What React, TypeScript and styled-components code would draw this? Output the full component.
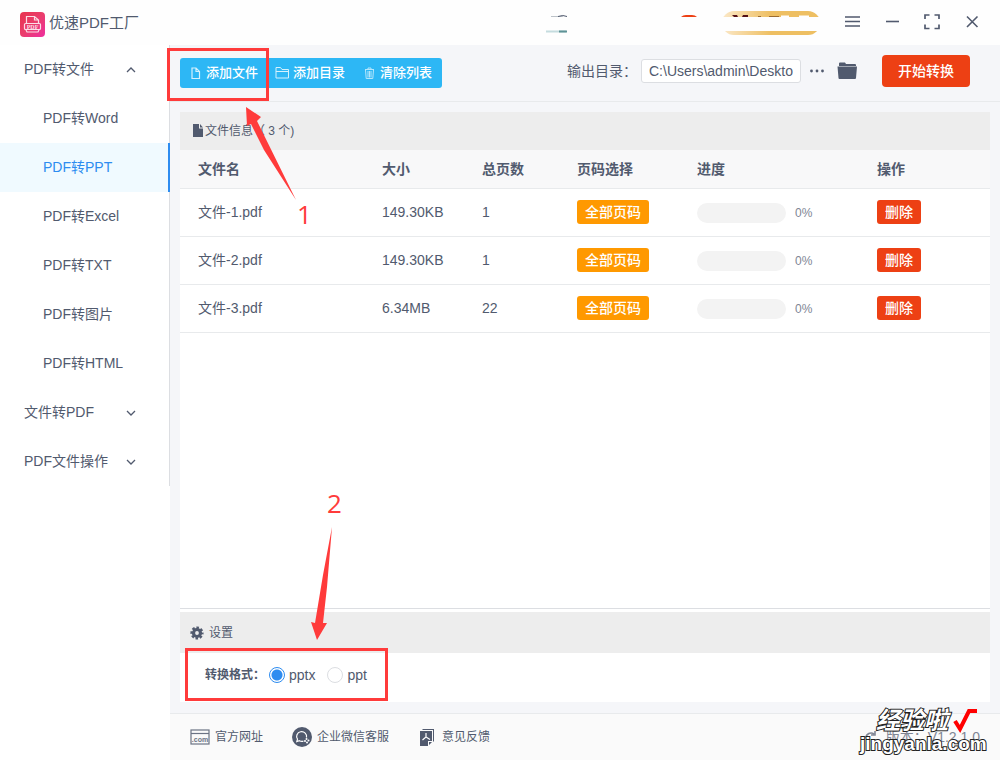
import React, { useState } from "react";
import styled, { createGlobalStyle } from "styled-components";

const Global = createGlobalStyle`
  *, *::before, *::after { box-sizing: border-box; }
  body {
    margin: 0;
    background: #f5f6f9;
    color: #515a6e;
    font: 14px/20px "Liberation Sans", "Noto Sans CJK SC", sans-serif;
  }
  button, input { font: inherit; color: inherit; }
  button { border: 0; padding: 0; background: none; cursor: pointer; }
  a { color: inherit; text-decoration: none; }
  svg { display: block; flex: none; }
`;

const Page = styled.div`
  position: relative;
  min-height: 100vh;
  display: flex;
  flex-direction: column;
`;

const Header = styled.header`
  height: 45px;
  flex: none;
  display: flex;
  align-items: center;
  justify-content: space-between;
  padding: 0 20px;
  background: #fefefe;
`;

const Brand = styled.h1`
  margin: 0;
  display: flex;
  align-items: flex-start;
  gap: 4px;
  padding-top: 4px;
  font-size: 15px;
  font-weight: 400;
  line-height: 22px;
`;

const HeaderRight = styled.div`
  display: flex;
  align-items: center;
`;

const Vip = styled.span`
  width: 98px;
  height: 24px;
  margin: 0 22px;
  border-radius: 12px;
  background: linear-gradient(#fefefe, #fefefe) 0 6px / 100% 14px no-repeat,
    linear-gradient(90deg, #fbe8c8, #eebf62 50%, #eebf62);
`;

const WindowButtons = styled.div`
  display: flex;
  gap: 20px;
  margin-right: -2px;
  padding-bottom: 2px;
`;

const WindowButton = styled.button`
  width: 20px;
  height: 20px;
`;

const Body = styled.div`
  flex: 1;
  display: flex;
`;

const Sidebar = styled.nav`
  width: 170px;
  flex: none;
  background: #fff;
`;

const Menu = styled.div`
  border-right: 1px solid #dcdee2;
`;

const Group = styled.button`
  width: 100%;
  height: 49px;
  display: flex;
  align-items: center;
  justify-content: space-between;
  padding: 0 31px 2px 24px;
`;

const MenuItem = styled.a<{ $active?: boolean }>`
  height: 49px;
  display: flex;
  align-items: center;
  padding: 0 0 2px 43px;
  margin-right: -1px;
  color: ${(p) => (p.$active ? "#2d8cf0" : "inherit")};
  background: ${(p) => (p.$active ? "#f0faff" : "transparent")};
  border-right: ${(p) => (p.$active ? "2px solid #2d8cf0" : "0")};
`;

const Main = styled.main`
  flex: 1;
  min-width: 0;
  display: flex;
  flex-direction: column;
`;

const Toolbar = styled.div`
  height: 57px;
  display: flex;
  align-items: flex-start;
  justify-content: space-between;
  padding: 10px 30px 0 10px;
  border-bottom: 1px solid #e8eaec;
`;

const ActionGroup = styled.div`
  position: relative;
  display: flex;
  height: 30px;
  margin-top: 3px;
  padding-right: 1px;
  border-radius: 3px;
  background: #2db7f5;
`;

const Action = styled.button`
  display: flex;
  align-items: center;
  gap: 4px;
  padding: 0 9px 0 8px;
  color: #fff;
  font-size: 13px;
  font-weight: 500;
`;

const Output = styled.div`
  display: flex;
  align-items: center;
`;

const PathInput = styled.input`
  width: 160px;
  height: 24px;
  margin: 0 8px 0 4px;
  padding: 0 7px;
  border: 1px solid #dcdee2;
  border-radius: 3px;
  background: #fff;
`;

const IconButton = styled.button`
  margin-right: 12px;
`;

const StartButton = styled.button`
  height: 32px;
  margin-left: 12px;
  padding: 0 16px;
  border-radius: 4px;
  background: #ed4014;
  color: #fff;
  font-weight: 500;
`;

const Content = styled.div`
  flex: 1;
  display: flex;
  flex-direction: column;
  padding: 10px 10px 11px;
`;

const Panel = styled.section<{ $grow?: boolean }>`
  position: relative;
  background: #fff;
  flex: ${(p) => (p.$grow ? "1" : "none")};
  border-bottom: ${(p) => (p.$grow ? "1px solid #dcdee2" : "0")};
`;

const PanelTitle = styled.h2<{ $gap: number; $height: number }>`
  margin: 0;
  height: ${(p) => p.$height}px;
  display: flex;
  align-items: center;
  gap: ${(p) => p.$gap}px;
  padding: 0 10px;
  background: #ededed;
  font-size: 12px;
  font-weight: 400;
`;

const Divider = styled.div`
  height: 3px;
  background: #fff;
`;

const FileTable = styled.table`
  width: 100%;
  table-layout: fixed;
  border-collapse: separate;
  border-spacing: 0;

  th, td {
    padding: 0 0 2px 18px;
    border-bottom: 1px solid #e8eaec;
    text-align: left;
  }
  th {
    height: 39px;
    padding-bottom: 0;
    background: #f8f8f9;
    font-weight: 700;
  }
  td { height: 48px; }
`;

const Tag = styled.button<{ $tone: string }>`
  display: block;
  height: 24px;
  padding: 0 8px;
  border-radius: 3px;
  background: ${(p) => p.$tone};
  color: #fff;
  font-weight: 500;
`;

const Progress = styled.div`
  display: flex;
  align-items: center;
  gap: 9px;
  padding-top: 2px;
  font-size: 12px;
  color: #808695;
`;

const Track = styled.span`
  width: 89px;
  height: 20px;
  border-radius: 10px;
  background: #f3f3f3;
`;

const Options = styled.div`
  height: 49px;
  display: flex;
  align-items: center;
  padding: 0 25px 6px;
`;

const OptionsLabel = styled.span`
  width: 64px;
  font-size: 12px;
  font-weight: 700;
`;

const RadioLabel = styled.label`
  display: flex;
  align-items: center;
  gap: 4px;
  margin-right: 12px;
`;

const Radio = styled.input`
  appearance: none;
  width: 16px;
  height: 16px;
  margin: 0;
  border: 1px solid #dcdee2;
  border-radius: 50%;
  background: #fff;

  &:checked {
    border-color: #2d8cf0;
    background: radial-gradient(circle, #2d8cf0 5px, #fff 6px);
  }
`;

const Footer = styled.footer`
  height: 47px;
  display: flex;
  align-items: center;
  gap: 29px;
  padding: 0 20px;
  border-top: 1px solid #e8eaec;
  background: #fafafa;
  font-size: 12px;
`;

const FooterLink = styled.a`
  display: flex;
  align-items: center;
  gap: 5px;
`;

const Version = styled.span`
  margin-left: auto;
  display: flex;
  align-items: center;
  gap: 8px;
  font-size: 14px;
  color: #808695;
`;

const RedBox = styled.span<{ $top: number; $left: number; $width: number }>`
  position: absolute;
  top: ${(p) => p.$top}px;
  left: ${(p) => p.$left}px;
  width: ${(p) => p.$width}px;
  height: 53px;
  border: 3px solid #ff3b3b;
  pointer-events: none;
`;

const Arrow = styled.svg<{ $top: number; $left: number }>`
  position: absolute;
  top: ${(p) => p.$top}px;
  left: ${(p) => p.$left}px;
  pointer-events: none;
`;

const StepNumber = styled.span<{ $top: number; $left: number }>`
  position: absolute;
  top: ${(p) => p.$top}px;
  left: ${(p) => p.$left}px;
  color: #ff3b3b;
  font: 500 26px/26px "Open Sans", sans-serif;
`;

const Watermark = styled.div`
  position: absolute;
  right: 15px;
  bottom: 6px;
  width: 125px;
  display: flex;
  flex-direction: column;
  color: #fff;
  font-weight: 700;
  -webkit-text-stroke: 2px #222;
  paint-order: stroke fill;
  pointer-events: none;
`;

const WatermarkTop = styled.span`
  display: flex;
  align-items: center;
  gap: 4px;
  padding-left: 16px;
  font-size: 24px;
  font-style: italic;
  line-height: 22px;
`;

const WatermarkSite = styled.span`
  font-size: 19px;
  line-height: 20px;
`;

const Chevron = ({ up }: { up?: boolean }) => (
  <svg width="14" height="14" viewBox="0 0 14 14" fill="none" stroke="#515a6e" strokeWidth="1.3">
    <path d={up ? "M3 10l4-4 4 4" : "M3 6l4 4 4-4"} />
  </svg>
);

const Logo = () => (
  <svg width="25" height="25" viewBox="0 0 25 25">
    <defs>
      <linearGradient id="logo" x1="0" y1="0" x2="1" y2="1">
        <stop offset="0" stopColor="#e8344e" />
        <stop offset=".5" stopColor="#ea3d6c" />
        <stop offset="1" stopColor="#ee2fa0" />
      </linearGradient>
    </defs>
    <rect width="25" height="25" rx="4" fill="url(#logo)" />
    <g fill="none" stroke="#fbdde6" strokeWidth="1.2">
      <path d="M6.500 11V4.500h8l4 3.500v3M14.500 4.500V8h4" />
      <rect x="4.500" y="11.500" width="16" height="6" rx="1" />
      <path d="M6 18l1 2h11l1-2" />
    </g>
    <text x="12.500" y="17" textAnchor="middle" fontSize="6" fontWeight="700" fontFamily="Liberation Serif, serif" fill="#fbdde6">PDF</text>
  </svg>
);

const files = [
  { name: "文件-1.pdf", size: "149.30KB", pages: 1 },
  { name: "文件-2.pdf", size: "149.30KB", pages: 1 },
  { name: "文件-3.pdf", size: "6.34MB", pages: 22 },
];

const targets = ["Word", "PPT", "Excel", "TXT", "图片", "HTML"];

export default function App() {
  const [format, setFormat] = useState("pptx");
  const [active, setActive] = useState("PPT");

  return (
    <Page>
      <Global />
      <Header>
        <Brand>
          <Logo />
          优速PDF工厂
        </Brand>
        <HeaderRight>
          <svg width="154" height="24" viewBox="0 0 154 24">
            <path d="M5 5.500h12" stroke="#bcc2c8" />
            <path d="M12 5.500q5-2 9 0" stroke="#515a6e" fill="none" />
            <path d="M0 20.500h20" stroke="#c5dcdf" strokeWidth="2" />
            <path d="M13 20.500h8" stroke="#5e9397" strokeWidth="2" />
            <path d="M135 6q2-2 5-2h6q3 0 5 2z" fill="#ed4014" />
          </svg>
          <Vip>
            <svg width="98" height="24" viewBox="0 0 98 24">
              <path d="M10 4h5l1 2h-4zM20 6l1-2h5v2z" fill="#531016" />
              <path d="M36 5.500h3M47 5.500h10" stroke="#9c6c30" />
              <path d="M59 5.500h8M77 5.500h10" stroke="#fefefe" strokeWidth="2" />
            </svg>
          </Vip>
          <WindowButtons>
            <WindowButton aria-label="菜单">
              <svg width="20" height="20" stroke="#515a6e" strokeWidth="1.5"><path d="M3 5h15M3 9.500h15M3 14h15" /></svg>
            </WindowButton>
            <WindowButton aria-label="最小化">
              <svg width="20" height="20" stroke="#515a6e" strokeWidth="1.6"><path d="M4 9.500h13" /></svg>
            </WindowButton>
            <WindowButton aria-label="最大化">
              <svg width="20" height="20" fill="none" stroke="#515a6e" strokeWidth="1.7">
                <path d="M3 7V3h4.500M12.500 3H17v4M17 12.500V16.500h-4.500M7.500 16.500H3v-4" />
              </svg>
            </WindowButton>
            <WindowButton aria-label="关闭">
              <svg width="20" height="20" stroke="#515a6e" strokeWidth="1.6"><path d="M5 4.500l10.500 10.500M15.500 4.500L5 15" /></svg>
            </WindowButton>
          </WindowButtons>
        </HeaderRight>
      </Header>

      <Body>
        <Sidebar>
          <Menu>
            <Group>PDF转文件<Chevron up /></Group>
            {targets.map((t) => (
              <MenuItem key={t} href="#" $active={t === active} onClick={() => setActive(t)}>
                PDF转{t}
              </MenuItem>
            ))}
            <Group>文件转PDF<Chevron /></Group>
            <Group>PDF文件操作<Chevron /></Group>
          </Menu>
        </Sidebar>

        <Main>
          <Toolbar>
            <ActionGroup>
              <Action>
                <svg width="14" height="14" fill="none" stroke="#d5f1fd" strokeWidth="1.2">
                  <path d="M4 2h4l3.500 3.500v7H4zM8 2v3.500h3.500" />
                </svg>
                添加文件
              </Action>
              <Action>
                <svg width="14" height="14" fill="none" stroke="#d5f1fd" strokeWidth="1">
                  <path d="M1 12V1.500h4.500L7 3.500h6.500V12zM1 5.500h12.500" />
                </svg>
                添加目录
              </Action>
              <Action>
                <svg width="14" height="14" fill="none" stroke="#b5e6fc" strokeWidth="1">
                  <path d="M3 3.500h9M6 3V2h3v1M3.500 4l.7 8.500h6.600l.7-8.500M6 5v6.500M7.500 5v6.500M9 5v6.500" />
                </svg>
                清除列表
              </Action>
              <RedBox $top={-10} $left={-13} $width={102} />
            </ActionGroup>
            <Output>
              <label htmlFor="output">输出目录：</label>
              <PathInput id="output" defaultValue="C:\Users\admin\Deskto" />
              <IconButton aria-label="更多">
                <svg width="16" height="16" fill="#515a6e"><circle cx="2.500" cy="8" r="1.400" /><circle cx="8" cy="8" r="1.400" /><circle cx="13.500" cy="8" r="1.400" /></svg>
              </IconButton>
              <IconButton aria-label="打开目录">
                <svg width="21" height="20" fill="#515a6e">
                  <path d="M2 5V2.500q0-1 1-1h5l1 1.500h9q1 0 1 1v1z" />
                  <path d="M.5 5.500h19.500l-1 11.500q0 1-1 1H2.500q-1 0-1-1z" />
                </svg>
              </IconButton>
              <StartButton>开始转换</StartButton>
            </Output>
          </Toolbar>

          <Content>
            <Panel $grow>
              <PanelTitle $gap={0} $height={38}>
                <svg width="15" height="16" fill="#515a6e"><path d="M3 1h6v4.500h4V14H3zM10 1l3 3.500h-3z" /></svg>
                文件信息（ 3 个)
              </PanelTitle>
              <FileTable>
                <colgroup>
                  <col width="184" /><col width="100" /><col width="95" /><col width="120" /><col width="180" /><col />
                </colgroup>
                <thead>
                  <tr><th>文件名</th><th>大小</th><th>总页数</th><th>页码选择</th><th>进度</th><th>操作</th></tr>
                </thead>
                <tbody>
                  {files.map((f) => (
                    <tr key={f.name}>
                      <td>{f.name}</td>
                      <td>{f.size}</td>
                      <td>{f.pages}</td>
                      <td><Tag $tone="#ff9900">全部页码</Tag></td>
                      <td><Progress><Track />0%</Progress></td>
                      <td><Tag $tone="#ed4014">删除</Tag></td>
                    </tr>
                  ))}
                </tbody>
              </FileTable>
              <Arrow $top={-6} $left={65} width="52" height="96">
                <path d="M1 1l15 10-4 4 39 79L19 44 6 18l-4 2z" fill="#ff3b3b" />
              </Arrow>
              <StepNumber $top={89} $left={117}>1</StepNumber>
            </Panel>
            <Divider />
            <Panel>
              <PanelTitle $gap={5} $height={41}>
                <svg width="14" height="14" viewBox="0 0 14 14">
                  <circle cx="7" cy="7" r="3.500" fill="none" stroke="#515a6e" strokeWidth="3.200" />
                  <circle cx="7" cy="7" r="5.400" fill="none" stroke="#515a6e" strokeWidth="2.400" strokeDasharray="2.500 1.741" strokeDashoffset="1.250" />
                </svg>
                设置
              </PanelTitle>
              <Options role="radiogroup" aria-label="转换格式">
                <OptionsLabel>转换格式：</OptionsLabel>
                {["pptx", "ppt"].map((f) => (
                  <RadioLabel key={f}>
                    <Radio type="radio" name="format" checked={format === f} onChange={() => setFormat(f)} />
                    {f}
                  </RadioLabel>
                ))}
              </Options>
              <RedBox $top={36} $left={5} $width={203} />
              <Arrow $top={-86} $left={130} width="24" height="116">
                <path d="M22 1l-5 60-4 36h4L7 114 1 96l4 1 8-48z" fill="#ff3b3b" />
              </Arrow>
              <StepNumber $top={-122} $left={147}>2</StepNumber>
            </Panel>
          </Content>

          <Footer>
            <FooterLink href="#">
              <svg width="20" height="16" fill="none" stroke="#6b7384" strokeWidth="1.200">
                <rect x="1" y="1" width="18" height="14" />
                <path d="M1 4.500h18" />
                <text x="10" y="13" textAnchor="middle" fontSize="7" fontWeight="700" fill="#6b7384" stroke="none">.com</text>
              </svg>
              官方网址
            </FooterLink>
            <FooterLink href="#">
              <svg width="20" height="20" fill="none">
                <circle cx="10" cy="10" r="10" fill="#515a6e" />
                <path d="M14.500 10.500A5 4.800 0 1 0 5.500 12.200L4.800 14.500l2.600-.8q2 1 4 .4" stroke="#fff" strokeWidth="1.200" />
                <g fill="#fff"><circle cx="14.500" cy="12" r="1" /><circle cx="16.500" cy="13.500" r="1" /><circle cx="13" cy="14" r="1" /><circle cx="15" cy="15.500" r="1" /></g>
              </svg>
              企业微信客服
            </FooterLink>
            <FooterLink href="#">
              <svg width="19" height="18">
                <path d="M4 2l1-1h11v12l-1 1V2z" fill="#515a6e" />
                <path d="M2 3h12v10h-4v5H2zM11 14h3l-3 3z" fill="#515a6e" />
                <path d="M8 5v4l-3.500 3M8 9l4 2.500" stroke="#fff" fill="none" strokeWidth="1.200" />
              </svg>
              意见反馈
            </FooterLink>
            <Version>
              <svg width="14" height="14" fill="none" stroke="#808695" strokeWidth="1.600"><path d="M2 8a5 5 0 0 1 8-4M11 1v4H7" /></svg>
              版本：V1.2.1.0
            </Version>
          </Footer>
        </Main>
      </Body>

      <Watermark>
        <WatermarkTop>
          经验啦
          <svg width="26" height="26" fill="none"><path d="M3 13l5 8L17 3h8" stroke="#f00" strokeWidth="4" /></svg>
        </WatermarkTop>
        <WatermarkSite>jingyanla.com</WatermarkSite>
      </Watermark>
    </Page>
  );
}
